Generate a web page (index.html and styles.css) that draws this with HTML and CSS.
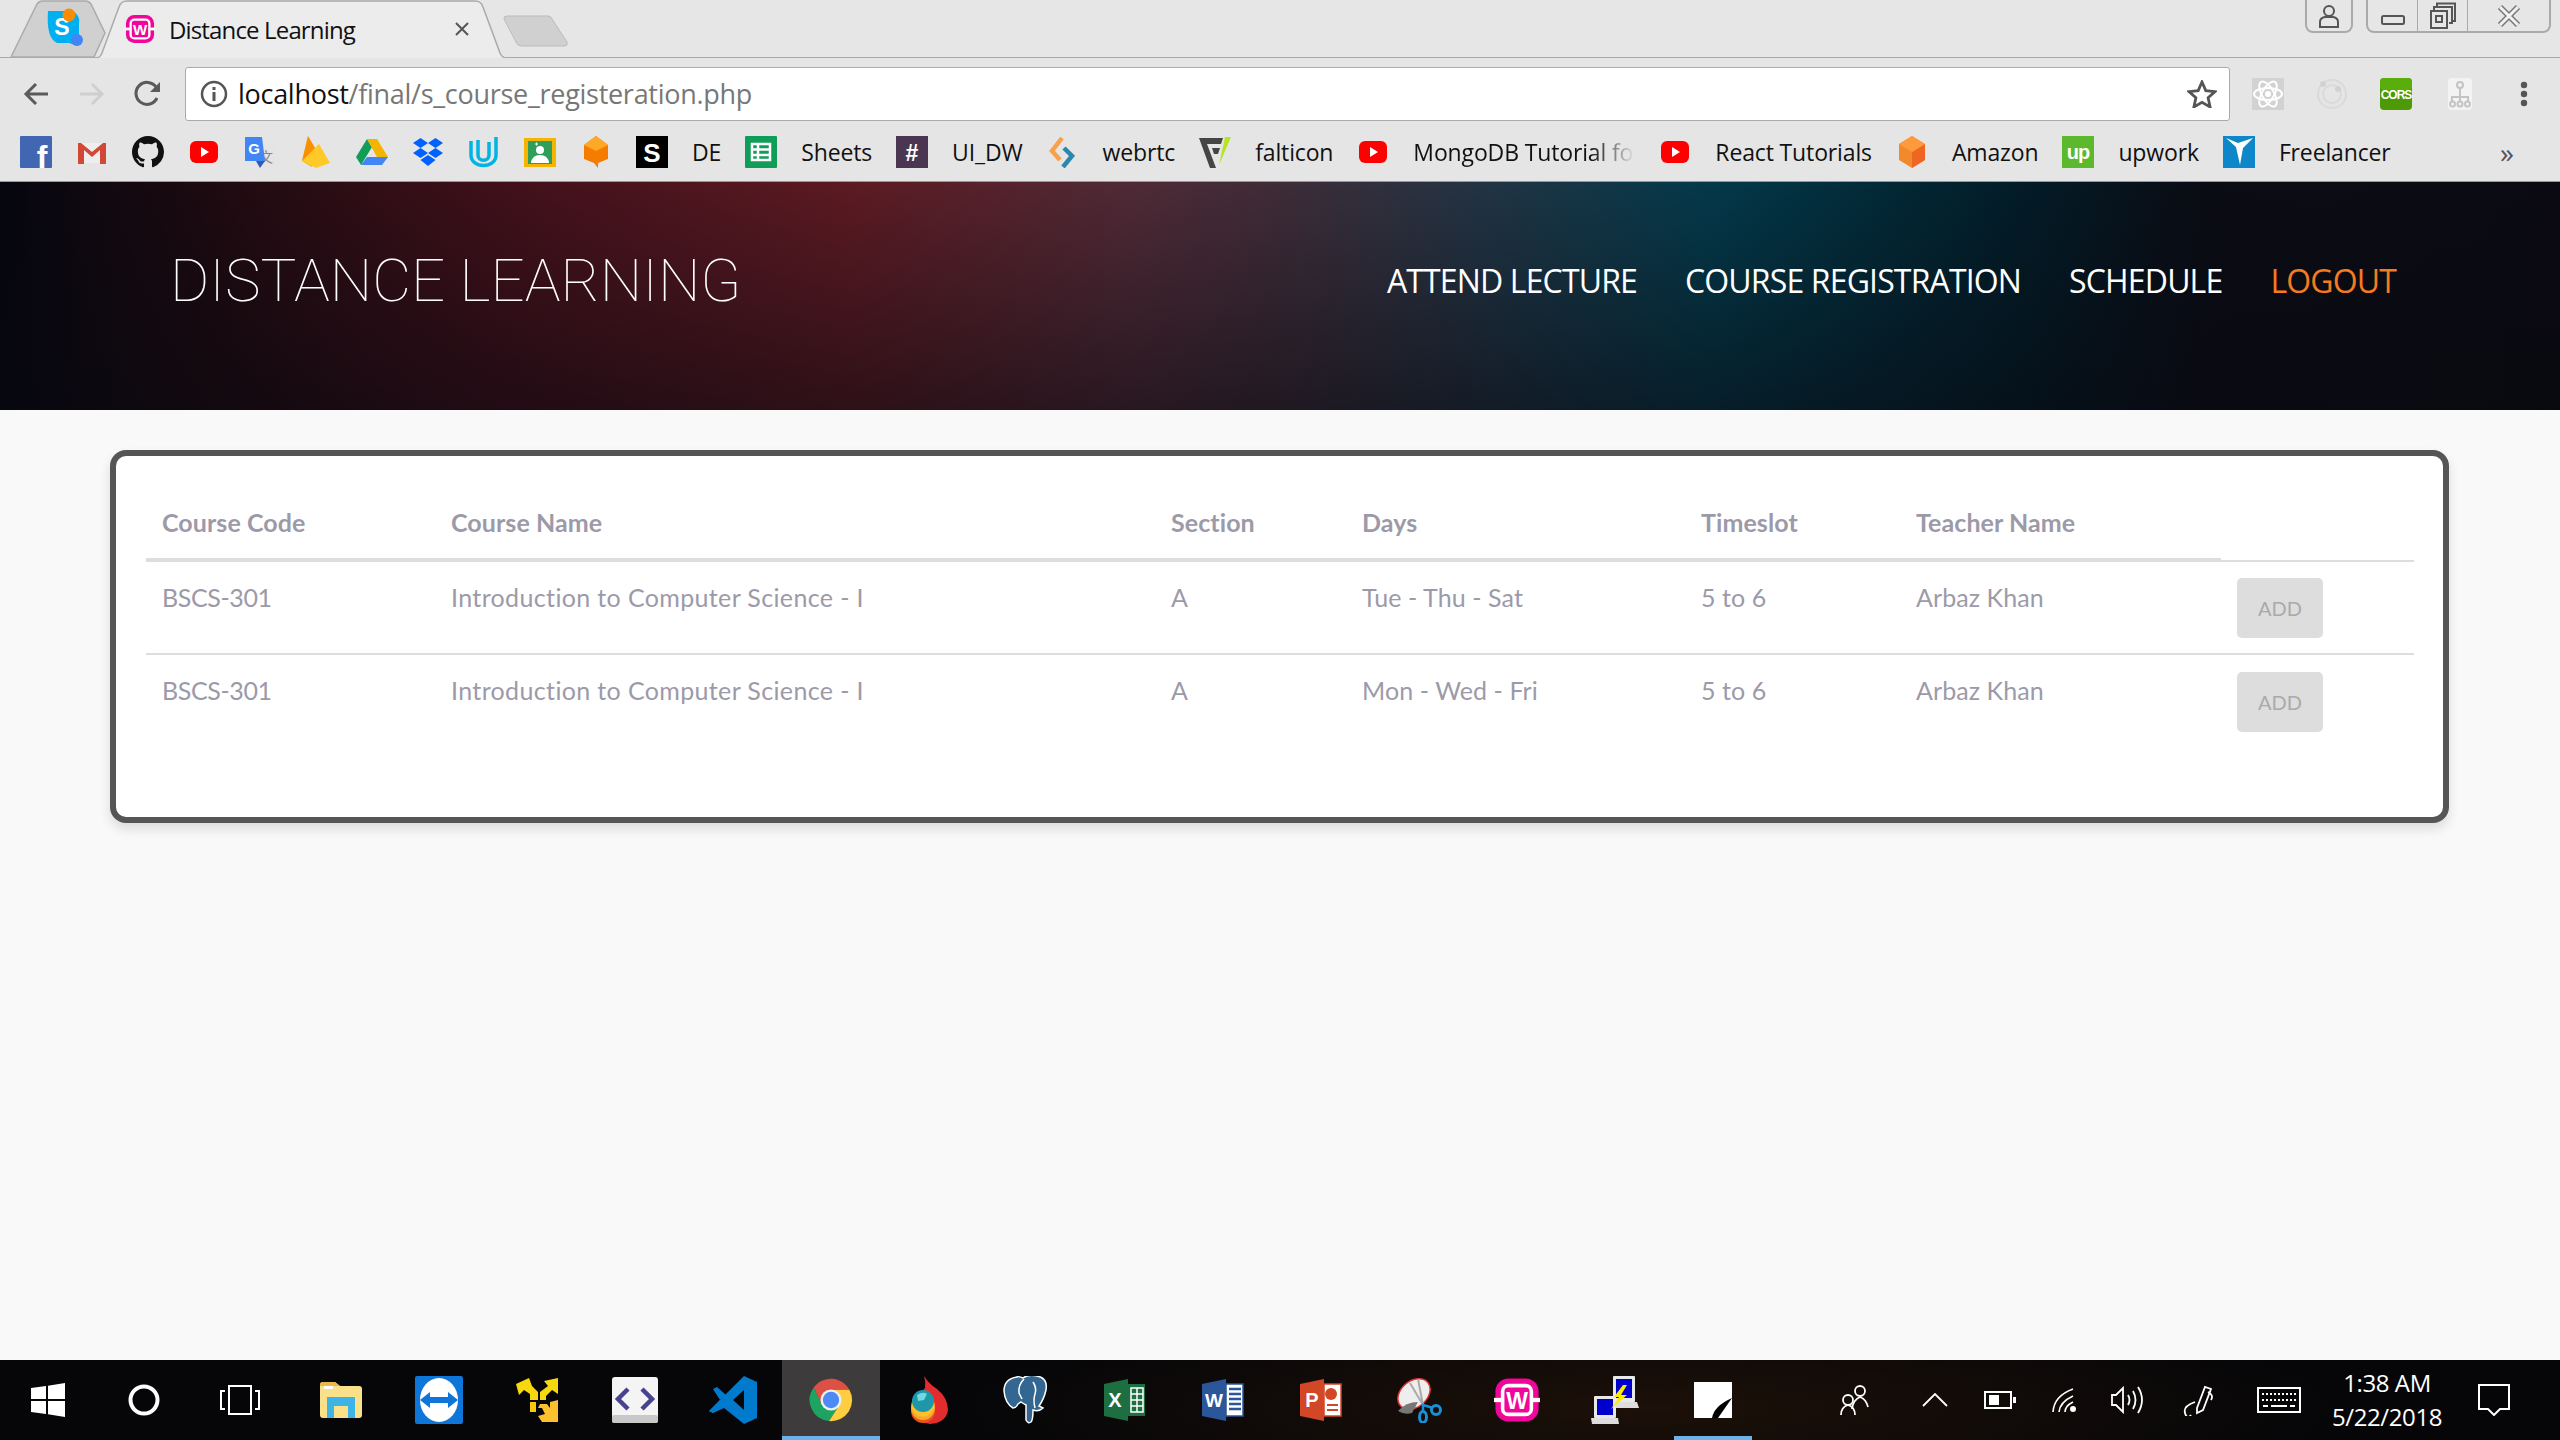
FILE: index.html
```html
<!DOCTYPE html>
<html lang="en">
<head>
    <meta charset="UTF-8">
    <title>Distance Learning</title>
    <link rel="stylesheet" href="styles.css">
</head>
<body>

    <!-- Shared icons -->
    <svg class="sprite" width="0" height="0">
        <symbol id="i-youtube" viewBox="0 0 32 32">
            <rect x="2" y="5" width="28" height="22" rx="6" fill="#f00"/>
            <path d="M13 11l8 5-8 5z" fill="#fff"/>
        </symbol>
    </svg>

    <!-- Browser window -->
    <div class="browser">
        <div class="tabstrip">
            <div class="tab tab-pinned">
                <svg class="tab-shape" viewBox="0 0 96 58" width="96" height="58">
                    <path d="M1 57L26 6q2-5 7-5h42q5 0 7 5l13 27-11 24z" fill="#d0d0d0" stroke="#aaa" stroke-width="1.5"/>
                </svg>
                <svg class="tab-icon" viewBox="0 0 42 42" width="42" height="42">
                    <path d="M3 3h22a10 10 0 0 1 9 12v18a8 8 0 0 1-10 2H12Q1 30 3 3z" fill="#00aff0"/>
                    <text x="17" y="27" text-anchor="middle" font-size="23" class="logo-text" fill="#fff">S</text>
                    <circle cx="24" cy="7" r="6.5" fill="#fb8c00"/>
                    <circle cx="32" cy="32" r="6" fill="#4285f4"/>
                </svg>
            </div>
            <div class="tab tab-active">
                <svg class="tab-shape" viewBox="0 0 411 58" width="411" height="58">
                    <path d="M0 58q4 0 6-5L23 7q2-6 8-6h348q6 0 8 6l17 46q2 5 7 5" fill="#ececec" stroke="#aaa" stroke-width="1.5"/>
                </svg>
                <svg class="tab-favicon" viewBox="0 0 32 32" width="30" height="30">
                    <rect x="1" y="1" width="30" height="30" rx="9" fill="#f0069a"/>
                    <rect x="6" y="6" width="20" height="20" rx="4" fill="none" stroke="#fff" stroke-width="2.5"/>
                    <rect x="0" y="14.5" width="7" height="3" fill="#fff"/>
                    <rect x="25" y="14.5" width="7" height="3" fill="#fff"/>
                    <text x="16" y="22" text-anchor="middle" font-size="16" class="logo-text" fill="#fff">W</text>
                </svg>
                <span class="tab-title">Distance Learning</span>
                <svg class="tab-close" viewBox="0 0 14 14" width="14" height="14">
                    <path d="M1 1l12 12M13 1L1 13" stroke="#555" stroke-width="2"/>
                </svg>
            </div>
            <svg class="new-tab" viewBox="0 0 66 32" width="66" height="32">
                <path d="M1 4q-.5-3 3-3h41q3 0 4 3l15 23q1 4-3 4H19q-5 0-6-4z" fill="#d0d0d0" stroke="#bbb"/>
            </svg>
            <div class="window-controls">
                <div class="win-box win-profile">
                    <svg viewBox="0 0 22 24" width="22" height="24"><circle cx="11" cy="7" r="5" fill="none" stroke="#555" stroke-width="2"/><path d="M2 23v-5q0-4 5-5h8q5 1 5 5v5z" fill="none" stroke="#555" stroke-width="2"/></svg>
                </div>
                <div class="win-box win-group">
                    <div class="win-btn win-min"><svg viewBox="0 0 24 10" width="24" height="10"><rect x="1" y="1" width="22" height="8" rx="1.5" fill="none" stroke="#555" stroke-width="2"/></svg></div>
                    <div class="win-btn win-max"><svg viewBox="0 0 28 28" width="28" height="28"><path d="M8 4V1.500h18V19h-3M5 8V5h18v16h-3" fill="none" stroke="#555" stroke-width="2"/><rect x="2" y="9" width="16" height="17" fill="none" stroke="#555" stroke-width="2"/><rect x="7" y="14" width="6" height="6" fill="none" stroke="#555" stroke-width="2"/></svg></div>
                    <div class="win-btn win-close"><svg viewBox="0 0 24 24" width="24" height="24"><path d="M3 3l18 18M21 3L3 21" stroke="#777" stroke-width="6"/><path d="M3 3l18 18M21 3L3 21" stroke="#f2f2f2" stroke-width="3"/></svg></div>
                </div>
            </div>
        </div>

        <div class="toolbar">
            <div class="tool-btn">
                <svg viewBox="0 0 26 24" width="26" height="24"><path d="M25 12H3M13 2L3 12l10 10" fill="none" stroke="#5a5a5a" stroke-width="3"/></svg>
            </div>
            <div class="tool-btn">
                <svg viewBox="0 0 26 24" width="26" height="24"><path d="M1 12h22M13 2l10 10-10 10" fill="none" stroke="#cfcfcf" stroke-width="3"/></svg>
            </div>
            <div class="tool-btn">
                <svg viewBox="0 0 28 28" width="28" height="28"><path d="M23 18a11 11 0 1 1-1-11" fill="none" stroke="#5a5a5a" stroke-width="3"/><path d="M26 2v10H16z" fill="#5a5a5a"/></svg>
            </div>
            <div class="address">
                <svg class="address-info" viewBox="0 0 28 28" width="28" height="28"><circle cx="14" cy="14" r="12" fill="none" stroke="#555" stroke-width="2.500"/><rect x="12.500" y="12" width="3" height="9" fill="#555"/><rect x="12.500" y="7" width="3" height="3" fill="#555"/></svg>
                <span class="url"><span class="url-host">localhost</span>/final/s_course_registeration.php</span>
                <svg class="address-star" viewBox="0 0 30 28" width="30" height="28"><path d="M15 2l3.800 8.600 9.200 1-6.900 6.200 2 9.200-8.100-4.700L6.900 27l2-9.200L2 11.600l9.200-1z" fill="none" stroke="#555" stroke-width="2.800"/></svg>
            </div>
            <div class="ext-btn">
                <svg viewBox="0 0 32 32" width="32" height="32"><rect width="32" height="32" rx="1" fill="#d2d2d2"/><g fill="none" stroke="#fff" stroke-width="2"><ellipse cx="16" cy="16" rx="14" ry="6"/><ellipse cx="16" cy="16" rx="14" ry="6" transform="rotate(60 16 16)"/><ellipse cx="16" cy="16" rx="14" ry="6" transform="rotate(120 16 16)"/></g><circle cx="16" cy="16" r="3" fill="#fff"/></svg>
            </div>
            <div class="ext-btn">
                <svg viewBox="0 0 32 32" width="32" height="32"><g fill="none" stroke="#dadada"><circle cx="16" cy="16" r="14" stroke-width="2"/><circle cx="16" cy="16" r="9" stroke-width="2"/></g><circle cx="7" cy="6" r="3" fill="#d2d2d2"/><circle cx="22" cy="11" r="3" fill="#d2d2d2"/></svg>
            </div>
            <div class="ext-btn">
                <svg viewBox="0 0 32 32" width="32" height="32"><rect width="32" height="32" rx="4" fill="#4d9a06"/><rect width="32" height="12" rx="4" fill="#5aae0b"/><text x="16" y="21" text-anchor="middle" font-size="12" class="logo-text narrow" fill="#fff">CORS</text></svg>
            </div>
            <div class="ext-btn">
                <svg viewBox="0 0 24 32" width="24" height="32"><rect width="24" height="32" rx="4" fill="#f3f3f3"/><g fill="none" stroke="#c4c4c4" stroke-width="2"><circle cx="12" cy="7" r="3"/><path d="M12 10v8M4 23v-4h16v4M12 18v5"/><circle cx="4.500" cy="26" r="2.500"/><circle cx="12" cy="26" r="2.500"/><circle cx="19.500" cy="26" r="2.500"/></g></svg>
            </div>
            <div class="ext-btn">
                <svg viewBox="0 0 8 26" width="8" height="26"><circle cx="4" cy="4" r="3.200" fill="#555"/><circle cx="4" cy="13" r="3.200" fill="#555"/><circle cx="4" cy="22" r="3.200" fill="#555"/></svg>
            </div>
        </div>

        <div class="bookmarks">
            <svg class="bm-icon" viewBox="0 0 32 32" overflow="visible"><rect width="32" height="32" rx="1" fill="#4267b2"/><text x="22" y="32" text-anchor="middle" font-size="32" class="logo-text" fill="#fff">f</text></svg>
            <svg class="bm-icon" viewBox="0 0 32 32"><rect x="3" y="7" width="26" height="20" fill="#eee"/><path d="M2 7v21h6V14l8 7 8-7v14h6V7h-3L16 16 5 7z" fill="#d14836"/></svg>
            <svg class="bm-icon" viewBox="0 0 16 16"><path d="M8 0C3.580 0 0 3.580 0 8c0 3.540 2.290 6.530 5.470 7.590.4.070.55-.17.55-.38 0-.19-.01-.82-.01-1.490-2.010.37-2.530-.49-2.690-.94-.09-.23-.48-.94-.82-1.130-.28-.15-.68-.52-.01-.53.63-.01 1.080.58 1.230.82.72 1.210 1.870.87 2.330.66.07-.52.28-.87.51-1.070-1.780-.2-3.640-.89-3.640-3.950 0-.87.31-1.590.82-2.150-.08-.2-.36-1.020.08-2.120 0 0 .67-.21 2.200.82.64-.18 1.320-.27 2-.27.68 0 1.360.09 2 .27 1.530-1.040 2.200-.82 2.200-.82.44 1.100.16 1.920.08 2.120.51.56.82 1.270.82 2.150 0 3.070-1.870 3.750-3.650 3.950.29.25.54.73.54 1.480 0 1.070-.01 1.930-.01 2.200 0 .21.15.46.55.38A8.013 8.013 0 0016 8c0-4.420-3.580-8-8-8z" fill="#111"/></svg>
            <svg class="bm-icon"><use href="#i-youtube"/></svg>
            <svg class="bm-icon" viewBox="0 0 32 32"><rect x="12" y="7" width="19" height="23" fill="#e4e4e4"/><text x="22" y="26" text-anchor="middle" font-size="14" class="cjk-text" fill="#888">文</text><path d="M1 1h17l3 24H1z" fill="#4285f4"/><path d="M12 25h9l-5 7z" fill="#2f5bb5"/><text x="10" y="18" text-anchor="middle" font-size="15" class="logo-text" fill="#fff">G</text></svg>
            <svg class="bm-icon" viewBox="0 0 32 32"><path d="M2 25L8 0l7 12-3 19z" fill="#ffa000"/><path d="M15 12l4-4 11 19-14 5-14-7z" fill="#ffca28"/><path d="M8 0l7 12-13 13z" fill="#f57c00" opacity=".45"/></svg>
            <svg class="bm-icon" viewBox="0 0 32 32"><path d="M11 3L0 21l5 8 11-18z" fill="#0f9d58"/><path d="M11 3h10l11 18H21z" fill="#f4b400"/><path d="M5 29h21l6-8H11z" fill="#4285f4"/></svg>
            <svg class="bm-icon" viewBox="0 0 32 32"><path d="M8.500 2l7.500 5-7.500 5L1 7zM23.500 2L31 7l-7.500 5L16 7zM8.500 12l7.500 5-7.500 5L1 17zM23.500 12l7.500 5-7.500 5-7.500-5zM16 19l7.500 5-7.500 6-7.500-6z" fill="#0061ff"/></svg>
            <svg class="bm-icon" viewBox="0 0 32 32"><path d="M3 5v14c0 14 25 14 25 0V1M10 4v15c0 7 11 7 11 0V6" fill="none" stroke="#02b3e4" stroke-width="3.500"/></svg>
            <svg class="bm-icon" viewBox="0 0 32 32"><rect x="0" y="2" width="32" height="29" fill="#f4b400"/><rect x="4" y="5" width="24" height="23" fill="#2f9e5b"/><circle cx="16" cy="14" r="4" fill="#fff"/><path d="M7 27q1-8 9-8t9 8z" fill="#fff"/><path d="M11 8h3M12.500 6.500v3" stroke="#fff"/></svg>
            <svg class="bm-icon" viewBox="0 0 32 32"><path d="M16 0l12 9v14l-10 4v5l-4-5-10-4V9z" fill="#f57c00"/><path d="M16 0l12 9-12 6L4 9z" fill="#ffa726"/></svg>
            <svg class="bm-icon" viewBox="0 0 32 32"><rect width="32" height="32" fill="#000"/><text x="16" y="26" text-anchor="middle" font-size="26" class="logo-text" fill="#fff">S</text></svg>
            <span class="bm-text">DE</span>
            <svg class="bm-icon" viewBox="0 0 32 32"><rect width="32" height="32" rx="1" fill="#0f9d58"/><path d="M7 8h18v16H7zM7 13.500h18M7 19h18M13 8v16" fill="none" stroke="#fff" stroke-width="2.500"/></svg>
            <span class="bm-text">Sheets</span>
            <svg class="bm-icon" viewBox="0 0 32 32"><rect width="32" height="32" fill="#4a3650"/><text x="16" y="25" text-anchor="middle" font-size="23" class="logo-text" fill="#fff">#</text></svg>
            <span class="bm-text">UI_DW</span>
            <svg class="bm-icon" viewBox="0 0 32 32"><path d="M15 2L5 15l8 9" fill="none" stroke="#f9a04d" stroke-width="4.500"/><path d="M17 12l8 8-9 11" fill="none" stroke="#2a87ad" stroke-width="4.500"/></svg>
            <span class="bm-text">webrtc</span>
            <svg class="bm-icon" viewBox="0 0 32 32"><path d="M0 2h24l-2 6H8l9 24h-6z" fill="#454545"/><path d="M13 12h8l-2 6h-4z" fill="#454545"/><path d="M26 1h6L20 29z" fill="#b5e61d"/></svg>
            <span class="bm-text">falticon</span>
            <svg class="bm-icon"><use href="#i-youtube"/></svg>
            <span class="bm-text bm-mongo">MongoDB Tutorial for</span>
            <svg class="bm-icon"><use href="#i-youtube"/></svg>
            <span class="bm-text">React Tutorials</span>
            <svg class="bm-icon" viewBox="0 0 32 32"><path d="M16 0l13 8v16l-13 8-13-8V8z" fill="#f08a2c"/><path d="M16 16l13-8v16l-13 8z" fill="#ee6622"/><path d="M16 0l13 8-13 8L3 8z" fill="#ff9a3c"/></svg>
            <span class="bm-text">Amazon</span>
            <svg class="bm-icon" viewBox="0 0 32 32"><rect width="32" height="32" fill="#5cb82c"/><text x="16" y="23" text-anchor="middle" font-size="20" class="logo-text narrow" fill="#fff">up</text></svg>
            <span class="bm-text">upwork</span>
            <svg class="bm-icon" viewBox="0 0 32 32"><rect width="32" height="32" fill="#0d87c9"/><path d="M3 2l10 9 4 18 3-17 10-10-15 5z" fill="#fff"/></svg>
            <span class="bm-text">Freelancer</span>
            <span class="bm-more">»</span>
        </div>
    </div>

    <!-- Site header -->
    <header class="site-header">
        <a class="brand" href="#">DISTANCE LEARNING</a>
        <nav class="site-nav">
            <a href="#">ATTEND LECTURE</a>
            <a href="#">COURSE REGISTRATION</a>
            <a href="#">SCHEDULE</a>
            <a class="nav-logout" href="#">LOGOUT</a>
        </nav>
    </header>

    <!-- Registration table -->
    <main class="content">
        <div class="card">
            <table class="course-table">
                <colgroup>
                    <col class="col-code"><col class="col-name"><col class="col-section"><col class="col-days"><col class="col-slot"><col class="col-teacher"><col class="col-action">
                </colgroup>
                <thead>
                    <tr>
                        <th>Course Code</th>
                        <th>Course Name</th>
                        <th>Section</th>
                        <th>Days</th>
                        <th>Timeslot</th>
                        <th>Teacher Name</th>
                        <th class="cell-action"></th>
                    </tr>
                </thead>
                <tbody>
                    <tr>
                        <td class="cell-code">BSCS-301</td>
                        <td class="cell-name">Introduction to Computer Science - I</td>
                        <td>A</td>
                        <td>Tue - Thu - Sat</td>
                        <td>5 to 6</td>
                        <td>Arbaz Khan</td>
                        <td class="cell-action"><button class="btn-add" type="button">ADD</button></td>
                    </tr>
                    <tr>
                        <td class="cell-code">BSCS-301</td>
                        <td class="cell-name">Introduction to Computer Science - I</td>
                        <td>A</td>
                        <td>Mon - Wed - Fri</td>
                        <td>5 to 6</td>
                        <td>Arbaz Khan</td>
                        <td class="cell-action"><button class="btn-add" type="button">ADD</button></td>
                    </tr>
                </tbody>
            </table>
        </div>
    </main>

    <!-- Windows taskbar -->
    <footer class="taskbar">
        <div class="task-sys">
            <svg viewBox="0 0 34 34" width="34" height="34"><path d="M0 5l15-2v13H0zM17 2.700L34 0v16H17zM0 18h15v13L0 29zM17 18h17v16l-17-2.700z" fill="#fff"/></svg>
        </div>
        <div class="task-sys">
            <svg viewBox="0 0 32 32" width="32" height="32"><circle cx="16" cy="16" r="13.500" fill="none" stroke="#fff" stroke-width="4"/></svg>
        </div>
        <div class="task-sys task-view">
            <svg viewBox="0 0 42 30" width="42" height="30"><rect x="10" y="1" width="22" height="28" fill="none" stroke="#fff" stroke-width="2"/><path d="M6 6H2v18h4M36 6h4v18h-4" fill="none" stroke="#fff" stroke-width="2"/></svg>
        </div>
        <div class="task-app">
            <svg viewBox="0 0 42 36" width="42" height="36"><path d="M0 3q0-3 3-3h12l5 4h19q3 0 3 3v26q0 3-3 3H3q-3 0-3-3z" fill="#fbe08a"/><path d="M0 3q0-3 3-3h12l5 4H0z" fill="#e8b94a"/><rect x="4" y="4" width="9" height="3" fill="#fff"/><path d="M7 36V15h28v21h-7V24H14v12z" fill="#3cb4e6"/></svg>
        </div>
        <div class="task-app">
            <svg viewBox="0 0 48 48" width="48" height="48"><rect width="48" height="48" rx="2" fill="#0e75d9"/><ellipse cx="24" cy="24" rx="19" ry="22" fill="#fff"/><path d="M5 24l10-8v5h18v-5l10 8-10 8v-5H15v5z" fill="#0e75d9"/></svg>
        </div>
        <div class="task-app">
            <svg viewBox="0 0 42 44" width="42" height="44"><path d="M0 6l13-6 3 8 6 6v8h-8v-6l-6-4-5 5z" fill="#f7d80f"/><path d="M42 0v16l-6-4-6 6v4h-6v-8l8-6-4-5z" fill="#f7d80f"/><path d="M14 24h6v10h-6z" fill="#f7c80f"/><path d="M24 26h7l3 4v-6l8-2v22H26l-4-6 7-2-3-6h-4z" fill="#fbc02d"/></svg>
        </div>
        <div class="task-app">
            <svg viewBox="0 0 46 46" width="46" height="46"><rect width="46" height="46" rx="3" fill="#f4f4f4"/><rect y="38" width="46" height="8" rx="2" fill="#c8c8c8"/><path d="M16 12L6 22l10 10M30 12l10 10-10 10" fill="none" stroke="#47438f" stroke-width="4.500"/></svg>
        </div>
        <div class="task-app">
            <svg viewBox="0 0 48 48" width="48" height="48"><path d="M35 0l13 6v36l-13 6L15 32l-11 5-4-2 11-11zM35 14L24 24l11 10z" fill="#007acc" fill-rule="evenodd"/><path d="M4 13l4-2 9 8-6 5zM0 35l11-11 4 4-11 9z" fill="#007acc"/></svg>
        </div>
        <div class="task-app task-active">
            <svg viewBox="0 0 48 48" width="46" height="46"><path d="M6 11A22 22 0 0 0 22 46l11-17-18 1z" fill="#1da462"/><path d="M43 13H24l9 16-11 17A22 22 0 0 0 43 13z" fill="#ffcd40"/><path d="M43 13A22 22 0 0 0 6 11l9 19 9-17z" fill="#dd5044"/><circle cx="24" cy="24" r="11" fill="#eee"/><circle cx="24" cy="24" r="8.500" fill="#4c8bf5"/></svg>
        </div>
        <div class="task-app">
            <svg viewBox="0 0 40 48" width="40" height="48"><path d="M15 0q5 8 13 13 11 9 11 21-2 13-18 14Q5 46 2 34q8-16 14-22 1-6-1-12z" fill="#e22c2e"/><circle cx="14" cy="35" r="12" fill="#e8541e"/><circle cx="14" cy="32" r="12" fill="#f9a825"/><circle cx="14" cy="29" r="11.500" fill="#fbc02d"/><circle cx="14" cy="25" r="11" fill="#1e98a8"/><path d="M8 19q6-4 10-1l-3 6-6 1z" fill="#6fd8e0"/></svg>
        </div>
        <div class="task-app">
            <svg viewBox="0 0 48 48" width="48" height="48"><path d="M14 1Q1 3 1 15q1 12 9 17 3 0 5-4l3-2q3 2 5 3v15q2 4 5 2 2-2 2-12 6 2 10-2l-4-2q5-7 7-16 2-12-9-14-9-2-14 2-5-2-6-1z" fill="#336791" stroke="#fff" stroke-width="1.500"/><path d="M21 3q-6 6-5 14l3 6M30 6q4 6 2 12t0 14" fill="none" stroke="#fff" stroke-width="1.500"/></svg>
        </div>
        <div class="task-app">
            <svg viewBox="0 0 42 42" width="42" height="42"><path d="M24 5h17v32H24z" fill="#1d6f42"/><path d="M27 9h12v24H27zM27 15h12M27 21h12M27 27h12M33 9v24" fill="none" stroke="#fff" stroke-width="1.500"/><path d="M0 5l24-5v42L0 37z" fill="#1d6f42"/><text x="11" y="28" text-anchor="middle" font-size="20" class="logo-text" fill="#fff">X</text></svg>
        </div>
        <div class="task-app">
            <svg viewBox="0 0 42 42" width="42" height="42"><path d="M24 5h17v32H24z" fill="#fff"/><path d="M24 5h17v32H24z" fill="none" stroke="#2b579a" stroke-width="1.500"/><path d="M27 10h12M27 15h12M27 20h12M27 25h12M27 30h12" stroke="#2b579a" stroke-width="2.500"/><path d="M0 5l24-5v42L0 37z" fill="#2b579a"/><text x="12" y="28" text-anchor="middle" font-size="19" class="logo-text" fill="#fff">W</text></svg>
        </div>
        <div class="task-app">
            <svg viewBox="0 0 42 42" width="42" height="42"><rect x="24" y="5" width="17" height="32" fill="#fff" stroke="#d24726" stroke-width="1.500"/><circle cx="31" cy="15" r="6" fill="#d24726"/><path d="M27 26h11M27 31h11" stroke="#d24726" stroke-width="2"/><path d="M0 5l24-5v42L0 37z" fill="#d24726"/><text x="12" y="28" text-anchor="middle" font-size="20" class="logo-text" fill="#fff">P</text></svg>
        </div>
        <div class="task-app">
            <svg viewBox="0 0 46 46" width="46" height="46"><ellipse cx="18" cy="17" rx="18" ry="13" transform="rotate(-40 18 17)" fill="#eee" stroke="#d33" stroke-width="1.500"/><path d="M2 34q8-9 20-9l-6 11Q8 38 2 34z" fill="#777"/><path d="M22 2l5 26M14 6l13 22" stroke="#aaa" stroke-width="2"/><circle cx="40" cy="33" r="4.500" fill="none" stroke="#1a8fd8" stroke-width="3"/><ellipse cx="27" cy="40" rx="3.500" ry="5.500" fill="none" stroke="#1a8fd8" stroke-width="3"/><path d="M27 34v-6l10 3" fill="none" stroke="#1a8fd8" stroke-width="2.500"/></svg>
        </div>
        <div class="task-app">
            <svg viewBox="0 0 32 32" width="46" height="46">
                <rect x="1" y="1" width="30" height="30" rx="9" fill="#f0069a"/>
                <rect x="6" y="6" width="20" height="20" rx="4" fill="none" stroke="#fff" stroke-width="2.5"/>
                <rect x="0" y="14.5" width="7" height="3" fill="#fff"/>
                <rect x="25" y="14.5" width="7" height="3" fill="#fff"/>
                <text x="16" y="22" text-anchor="middle" font-size="16" class="logo-text" fill="#fff">W</text>
            </svg>
        </div>
        <div class="task-app">
            <svg viewBox="0 0 48 48" width="48" height="48"><rect x="22" y="0" width="22" height="26" rx="1" fill="#e8e8e8"/><rect x="25" y="3" width="16" height="19" fill="#00c"/><path d="M22 26h24l2 6H24z" fill="#ddd"/><rect x="3" y="20" width="22" height="22" rx="1" fill="#e8e8e8"/><rect x="6" y="23" width="16" height="16" fill="#00c"/><path d="M0 42h27l1 6H1z" fill="#ddd"/><path d="M32 9l-9 12h5l-8 12 16-14h-6l6-10z" fill="#ffeb00"/></svg>
        </div>
        <div class="task-app task-open">
            <svg viewBox="0 0 38 36" width="38" height="36"><rect width="38" height="36" fill="#fff"/><path d="M38 16L24 36h-6q2-12 20-20z" fill="#000"/></svg>
        </div>

        <div class="tray">
            <div class="tray-item"><svg viewBox="0 0 30 30" width="30" height="30"><g fill="none" stroke="#fff" stroke-width="1.800"><circle cx="20" cy="6" r="5"/><path d="M12 24q1-9 8-12 6 2 8 10"/><circle cx="8" cy="15" r="5"/><path d="M1 30q0-8 7-10 7 2 7 10"/></g></svg></div>
            <div class="tray-item"><svg viewBox="0 0 26 14" width="26" height="14"><path d="M1 13L13 1l12 12" fill="none" stroke="#fff" stroke-width="1.800"/></svg></div>
            <div class="tray-item"><svg viewBox="0 0 32 18" width="32" height="18"><rect x="1" y="1" width="26" height="16" fill="none" stroke="#fff" stroke-width="2"/><rect x="5" y="4" width="10" height="10" fill="#fff"/><rect x="29" y="6" width="3" height="6" fill="#fff"/></svg></div>
            <div class="tray-item"><svg viewBox="0 0 26 24" width="26" height="24"><g fill="none" stroke="#fff" stroke-width="1.600"><path d="M1 24Q2 8 21 1M7 24q1-10 14-16M13 24q0-6 8-10"/></g><circle cx="21" cy="21" r="3" fill="#fff"/></svg></div>
            <div class="tray-item"><svg viewBox="0 0 32 28" width="32" height="28"><g fill="none" stroke="#fff" stroke-width="1.800"><path d="M1 9h4l7-7v24l-7-7H1z"/><path d="M17 9q3 5 0 10M22 5q5 9 0 18M27 1q8 13 0 26"/></g></svg></div>
            <div class="tray-item"><svg viewBox="0 0 32 32" width="32" height="32"><g fill="none" stroke="#fff" stroke-width="1.800"><path d="M14 24L22 3l6 2-8 21-6 3z"/><path d="M25 8q6 3 3 8M12 18q-12 4-10 11t6 2"/></g></svg></div>
            <div class="tray-item"><svg viewBox="0 0 44 26" width="44" height="26"><rect x="1" y="1" width="42" height="24" fill="none" stroke="#fff" stroke-width="2"/><path d="M5 7h34M5 13h34" stroke="#fff" stroke-width="2" stroke-dasharray="2 2"/><path d="M6 19h5M14 19h16M33 19h5" stroke="#fff" stroke-width="2"/></svg></div>
            <div class="tray-clock">
                <span>1:38 AM</span>
                <span>5/22/2018</span>
            </div>
            <div class="tray-item"><svg viewBox="0 0 32 32" width="32" height="32"><path d="M1 1h30v24H22l-6 6-6-6H1z" fill="none" stroke="#fff" stroke-width="2"/></svg></div>
        </div>
    </footer>

</body>
</html>
```

FILE: styles.css
```css
* {
    box-sizing: border-box;
}

html, body {
    height: 100%;
}

body {
    margin: 0;
    display: flex;
    flex-direction: column;
    overflow: hidden;
    font-family: "Open Sans", "Noto Sans", sans-serif;
    background-color: #f9f9f9;
}

a {
    text-decoration: none;
}

svg {
    display: block;
    flex-shrink: 0;
}

.sprite {
    position: absolute;
}

.logo-text {
    font-family: "Liberation Sans", sans-serif;
    font-weight: 700;
}

.logo-text.narrow {
    letter-spacing: -1px;
}

.cjk-text {
    font-family: "Noto Sans CJK SC", sans-serif;
}

/* Browser chrome */
.browser {
    flex-shrink: 0;
    background-color: #e5e5e5;
    color: #111;
    border-bottom: 1px solid #999;
}

.tabstrip {
    display: flex;
    height: 58px;
    padding-left: 10px;
    border-bottom: 1px solid #aaa;
    background-color: #e6e6e6;
}

.tab {
    position: relative;
    height: 58px;
    display: flex;
    align-items: center;
}

.tab-shape {
    position: absolute;
    left: 0;
    top: 0;
}

.tab-pinned {
    width: 96px;
}

.tab-icon {
    position: relative;
    margin-left: 35px;
    margin-top: -1px;
}

.tab-active {
    width: 411px;
    margin-left: -10px;
}

.tab-favicon {
    position: relative;
    margin-left: 29px;
}

.tab-title {
    position: relative;
    margin-left: 14px;
    font-size: 24px;
    letter-spacing: -.85px;
    white-space: nowrap;
}

.tab-close {
    position: relative;
    margin-left: auto;
    margin-right: 38px;
}

.new-tab {
    margin: 15px 0 0 -4px;
}

.window-controls {
    margin-left: auto;
    display: flex;
    gap: 13px;
    padding-right: 9px;
}

.win-box {
    height: 33px;
    display: flex;
    align-items: center;
    justify-content: center;
    border: 2px solid #aaa;
    border-top: 0;
    border-radius: 0 0 8px 8px;
}

.win-profile {
    width: 48px;
}

.win-group {
    width: 185px;
    justify-content: flex-start;
}

.win-btn {
    height: 100%;
    display: flex;
    align-items: center;
    justify-content: center;
}

.win-min {
    width: 50px;
    padding-top: 8px;
    border-right: 1px solid #aaa;
}

.win-max {
    width: 50px;
    border-right: 1px solid #aaa;
}

.win-close {
    flex: 1;
}

.toolbar {
    display: flex;
    align-items: center;
    height: 63px;
    padding: 8px 0 0 8px;
}

.tool-btn {
    width: 56px;
    display: flex;
    justify-content: center;
}

.address {
    width: 2045px;
    height: 54px;
    margin: 0 6px 0 9px;
    display: flex;
    align-items: center;
    padding: 0 12px 0 14px;
    background-color: #fff;
    border: 1px solid #aaa;
    border-radius: 3px;
}

.url {
    margin-left: 10px;
    font-size: 27px;
    letter-spacing: -.28px;
    color: #777;
}

.url-host {
    color: #111;
}

.address-star {
    margin-left: auto;
}

.ext-btn {
    width: 64px;
    display: flex;
    justify-content: center;
}

.bookmarks {
    display: flex;
    align-items: center;
    gap: 24px;
    height: 60px;
    padding: 2px 0 0 20px;
}

.bm-icon {
    width: 32px;
    height: 32px;
}

.bm-text {
    font-size: 23px;
    letter-spacing: -.14px;
    white-space: nowrap;
}

.bm-mongo {
    width: 222px;
    overflow: hidden;
    -webkit-mask-image: linear-gradient(to right, #000 80%, transparent);
    mask-image: linear-gradient(to right, #000 80%, transparent);
}

.bm-more {
    margin-left: auto;
    margin-right: 46px;
    font-size: 28px;
    color: #555;
}

/* Site header */
.site-header {
    flex-shrink: 0;
    height: 228px;
    display: flex;
    align-items: center;
    justify-content: space-between;
    padding: 0 164px 32px 170px;
    background:
        linear-gradient(to bottom, rgba(8, 8, 15, 0), rgba(8, 8, 15, .55)),
        linear-gradient(to right, #05060f 0, #1c0a10 200px, #40101a 500px, #5c1a22 850px, #4f2a36 1130px, #3e2c38 1280px, #1f3444 1500px, #03394a 1712px, #021e2a 2000px, #0a0c14 2200px, #0b0a12 2560px);
}

.brand {
    font-family: Roboto, sans-serif;
    font-weight: 100;
    font-size: 60px;
    color: #fff;
}

.site-nav {
    display: flex;
    gap: 48px;
}

.site-nav a {
    font-size: 32px;
    letter-spacing: -.85px;
    color: #fff;
}

.site-nav a.nav-logout {
    color: #f47b20;
}

/* Table card */
.content {
    flex: 1;
    padding: 40px 111px 0 110px;
}

.card {
    padding: 30px 29px 70px 30px;
    background-color: #fff;
    border: 6px solid #555;
    border-radius: 16px;
    box-shadow: 0 6px 12px rgba(0, 0, 0, .12);
}

.course-table {
    width: 2268px;
    table-layout: fixed;
    border-collapse: separate;
    border-spacing: 0;
    font-family: Lato, "Open Sans", sans-serif;
    font-size: 25px;
    line-height: 36px;
    letter-spacing: .08px;
    color: #9c9aa8;
}

.col-code { width: 289px; }
.col-name { width: 720px; }
.col-section { width: 191px; }
.col-days { width: 339px; }
.col-slot { width: 215px; }
.col-teacher { width: 321px; }
.col-action { width: 193px; }

.course-table th {
    padding: 18px 16px;
    height: 76px;
    text-align: left;
    font-weight: 700;
    border-bottom: 4px solid #ddd;
}

.course-table th.cell-action {
    border-bottom-width: 2px;
}

.course-table td {
    padding: 17px 16px 19px;
    vertical-align: top;
}

.course-table td.cell-code {
    letter-spacing: -.4px;
}

.course-table td.cell-name {
    letter-spacing: .36px;
}

.course-table tr + tr td {
    border-top: 2px solid #ddd;
}

.course-table td.cell-action {
    padding: 16px 16px 15px;
}

.course-table tr + tr td.cell-action {
    padding-top: 17px;
}

.btn-add {
    display: block;
    width: 86px;
    height: 60px;
    padding: 0;
    border: 0;
    border-radius: 5px;
    background-color: #ddd;
    font-family: Lato, "Open Sans", sans-serif;
    font-size: 20px;
    color: #aaa;
}

/* Taskbar */
.taskbar {
    flex-shrink: 0;
    height: 80px;
    display: flex;
    background:
        radial-gradient(ellipse 700px 110px at 1650px 60%, rgba(70, 35, 10, .35), transparent),
        #060608;
}

.task-sys {
    width: 96px;
    display: flex;
    align-items: center;
    justify-content: center;
}

.task-view {
    margin-right: 4px;
}

.task-app {
    width: 98px;
    display: flex;
    align-items: center;
    justify-content: center;
    border-bottom: 4px solid transparent;
    padding-top: 4px;
}

.task-active {
    background-color: #3d3b3b;
    border-bottom-color: #6cb2e8;
}

.task-open {
    position: relative;
}

.task-open::after {
    content: "";
    position: absolute;
    left: 10px;
    right: 10px;
    bottom: -4px;
    height: 4px;
    background-color: #6cb2e8;
}

.tray {
    display: grid;
    grid-template-columns: 70px 90px 40px 90px 34px 110px 50px 166px 48px;
    align-items: center;
    justify-items: center;
    margin-left: 58px;
}

.tray-clock {
    display: flex;
    flex-direction: column;
    align-items: center;
    gap: 8px;
    font-size: 24px;
    line-height: 26px;
    letter-spacing: -.4px;
    color: #fff;
}
```
